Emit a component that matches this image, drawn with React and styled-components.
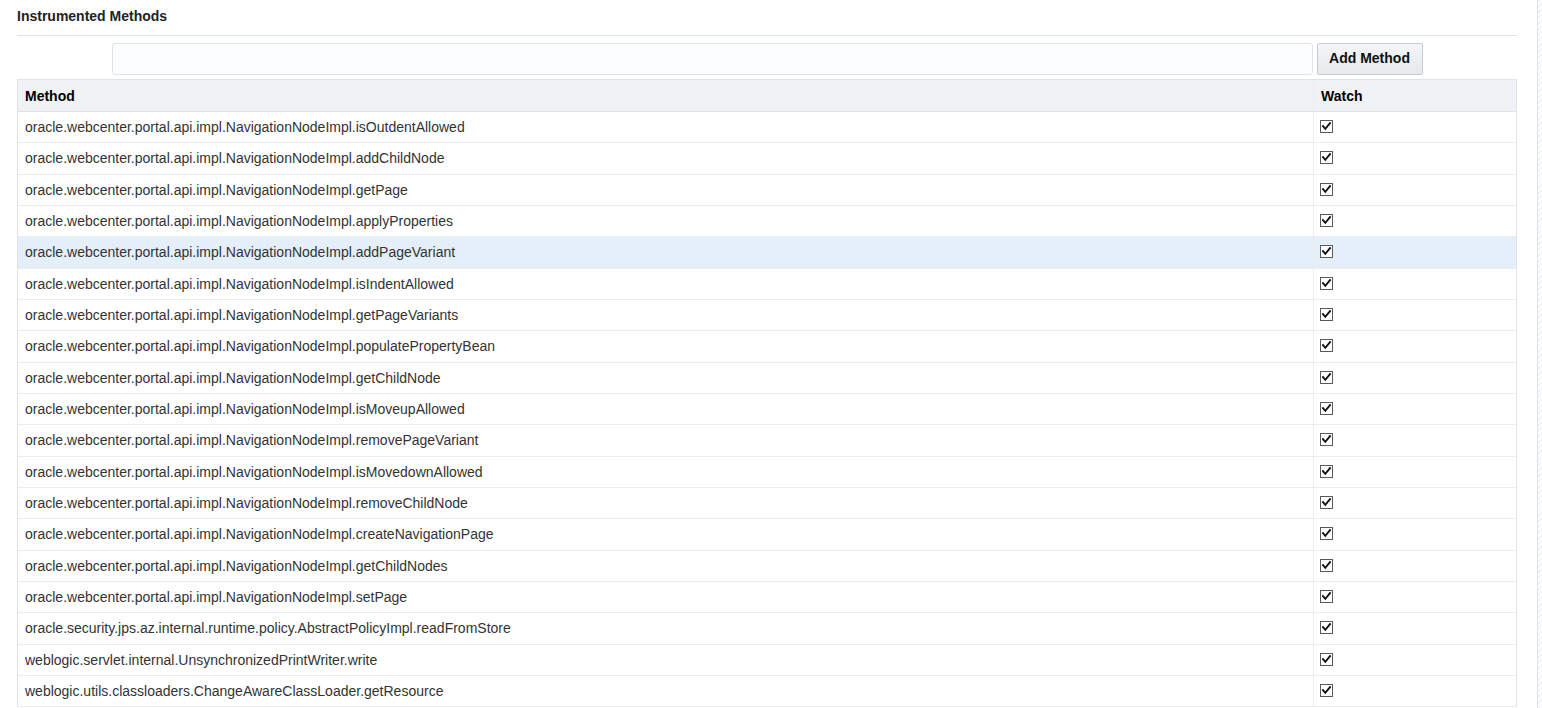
import React, { useState } from "react";
import styled, { createGlobalStyle } from "styled-components";

const GlobalStyle = createGlobalStyle`
  html, body {
    margin: 0;
    padding: 0;
    background: #ffffff;
    font-family: "Liberation Sans", Arial, sans-serif;
  }
`;

const Page = styled.div`
  display: flex;
  width: 1542px;
  height: 708px;
  overflow: hidden;
`;

const Main = styled.div`
  flex: 1;
  padding: 0 20px 0 17px;
`;

const ScrollStrip = styled.div`
  width: 4px;
  border-left: 1px solid #dde2e8;
  background: repeating-linear-gradient(
    135deg,
    #f3f5f8 0,
    #f3f5f8 2px,
    #ffffff 2px,
    #ffffff 4px
  );
`;

const Title = styled.h2`
  margin: 0;
  padding: 8px 0 0;
  height: 36px;
  box-sizing: border-box;
  font-size: 14px;
  font-weight: bold;
  color: #222;
  border-bottom: 1px solid #dfe3e8;
`;

const AddBar = styled.div`
  display: flex;
  justify-content: center;
  gap: 4px;
  padding: 7px 0 4px;
`;

const MethodInput = styled.input`
  width: 1201px;
  height: 32px;
  box-sizing: border-box;
  border: 1px solid #dfe3e8;
  border-radius: 3px;
  background: #fcfdfe;
  padding: 0 6px;
  font: 14px "Liberation Sans", Arial, sans-serif;
  outline: none;
`;

const AddButton = styled.button`
  width: 106px;
  height: 32px;
  box-sizing: border-box;
  padding: 0 0 2px;
  border: 1px solid #c5cbd3;
  border-radius: 2px;
  background: linear-gradient(#f4f5f7, #e6e8eb);
  font: bold 14px "Liberation Sans", Arial, sans-serif;
  color: #111;
  cursor: pointer;
`;

const Table = styled.div`
  border: 1px solid #dfe3e8;
  border-bottom: none;
  width: 1500px;
  box-sizing: border-box;
`;

const Row = styled.div`
  display: grid;
  grid-template-columns: 1295px 1fr;
  height: ${(p) => (p.$head ? "32px" : "31.33px")};
  box-sizing: border-box;
  border-bottom: 1px solid ${(p) => (p.$head ? "#dfe3e8" : "#ececec")};
  background: ${(p) =>
    p.$head ? "#f1f2f5" : p.$active ? "#e4eff9" : "#ffffff"};
`;

const Cell = styled.div`
  display: flex;
  align-items: center;
  padding-left: 7px;
  border-left: ${(p) => (p.$watch ? "1px solid #ececec" : "none")};
  font-size: 14px;
  font-weight: ${(p) => (p.$head ? "bold" : "normal")};
  color: ${(p) => (p.$head ? "#000" : "#333")};
  white-space: nowrap;
`;

const CheckCell = styled(Cell)`
  align-items: flex-start;
  padding-top: 8px;
  padding-left: 6px;
`;

const Box = styled.span`
  display: inline-block;
  width: 13px;
  height: 13px;
  box-sizing: border-box;
  border: 1px solid #5a5a5a;
  background: #fff;
  cursor: pointer;
  svg {
    display: block;
  }
`;

const Check = ({ checked, onToggle }) => (
  <Box onClick={onToggle}>
    {checked && (
      <svg width="11" height="11" viewBox="0 0 11 11">
        <path
          d="M2 5.2 L4.3 7.8 L9 2.2"
          fill="none"
          stroke="#111"
          strokeWidth="1.9"
          strokeLinecap="square"
        />
      </svg>
    )}
  </Box>
);

const methods = [
  "oracle.webcenter.portal.api.impl.NavigationNodeImpl.isOutdentAllowed",
  "oracle.webcenter.portal.api.impl.NavigationNodeImpl.addChildNode",
  "oracle.webcenter.portal.api.impl.NavigationNodeImpl.getPage",
  "oracle.webcenter.portal.api.impl.NavigationNodeImpl.applyProperties",
  "oracle.webcenter.portal.api.impl.NavigationNodeImpl.addPageVariant",
  "oracle.webcenter.portal.api.impl.NavigationNodeImpl.isIndentAllowed",
  "oracle.webcenter.portal.api.impl.NavigationNodeImpl.getPageVariants",
  "oracle.webcenter.portal.api.impl.NavigationNodeImpl.populatePropertyBean",
  "oracle.webcenter.portal.api.impl.NavigationNodeImpl.getChildNode",
  "oracle.webcenter.portal.api.impl.NavigationNodeImpl.isMoveupAllowed",
  "oracle.webcenter.portal.api.impl.NavigationNodeImpl.removePageVariant",
  "oracle.webcenter.portal.api.impl.NavigationNodeImpl.isMovedownAllowed",
  "oracle.webcenter.portal.api.impl.NavigationNodeImpl.removeChildNode",
  "oracle.webcenter.portal.api.impl.NavigationNodeImpl.createNavigationPage",
  "oracle.webcenter.portal.api.impl.NavigationNodeImpl.getChildNodes",
  "oracle.webcenter.portal.api.impl.NavigationNodeImpl.setPage",
  "oracle.security.jps.az.internal.runtime.policy.AbstractPolicyImpl.readFromStore",
  "weblogic.servlet.internal.UnsynchronizedPrintWriter.write",
  "weblogic.utils.classloaders.ChangeAwareClassLoader.getResource",
];

const App = () => {
  const [watched, setWatched] = useState(methods.map(() => true));
  const [hovered] = useState(4); // highlighted row

  const toggle = (i) =>
    setWatched((w) => w.map((v, j) => (j === i ? !v : v)));

  return (
    <Page>
      <GlobalStyle />
      <Main>
        <Title>Instrumented Methods</Title>
        <AddBar>
          <MethodInput type="text" />
          <AddButton>Add Method</AddButton>
        </AddBar>
        <Table>
          <Row $head>
            <Cell $head>Method</Cell>
            <Cell $head $watch>
              Watch
            </Cell>
          </Row>
          {methods.map((m, i) => (
            <Row key={m} $active={i === hovered}>
              <Cell>{m}</Cell>
              <CheckCell $watch>
                <Check checked={watched[i]} onToggle={() => toggle(i)} />
              </CheckCell>
            </Row>
          ))}
        </Table>
      </Main>
      <ScrollStrip />
    </Page>
  );
};

export default App;
